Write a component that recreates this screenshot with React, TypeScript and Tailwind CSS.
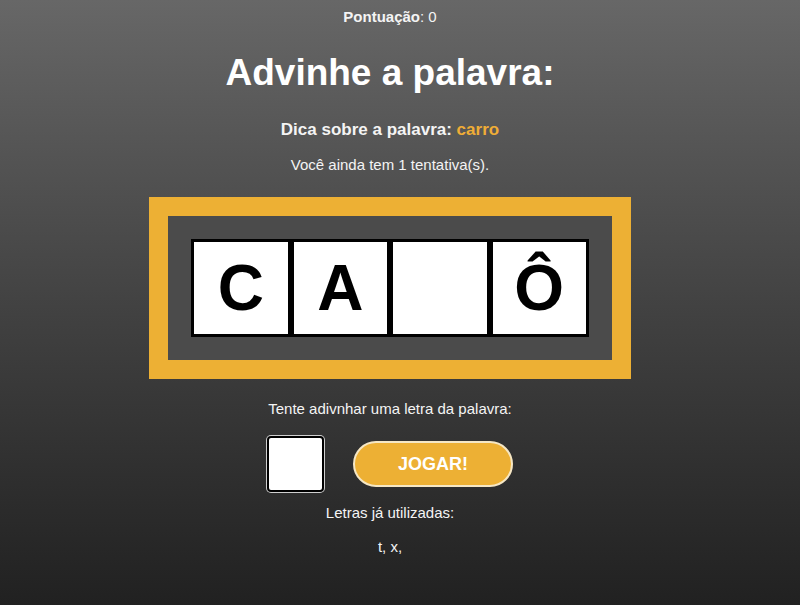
import { useState } from 'react';

const letters = ['C', 'A', '', 'Ô'];

export default function App() {
  const [guess, setGuess] = useState('');

  return (
    <div className="min-h-[605px] w-full bg-linear-to-b from-[#676767] to-[#212121] font-['Liberation_Sans',Arial,sans-serif] text-[#f4f4f4]">
      <div className="w-[780px] flex flex-col items-center text-center">
        <p className="mt-[9px] text-[15px] leading-[16px]">
          <b>Pontuação</b>: 0
        </p>

        <h1 className="mt-[28px] text-[37px] leading-[40px] font-bold text-white">Advinhe a palavra:</h1>

        <p className="mt-[27px] text-[17px] leading-[20px] font-bold">
          Dica sobre a palavra: <span className="text-[#efad36]">carro</span>
        </p>

        <p className="mt-[17px] text-[15px] leading-[16px]">Você ainda tem 1 tentativa(s).</p>

        {/* word board */}
        <div className="mt-[24px] w-[482px] border-[19px] border-[#edb034] bg-[#4b4b4b] p-[23px]">
          <div className="flex h-[98px]">
            {letters.map((l, i) => (
              <div
                key={i}
                className="flex-1 flex items-center justify-center bg-white border-[3px] border-black text-[64px] font-bold text-black leading-none"
              >
                {l}
              </div>
            ))}
          </div>
        </div>

        <p className="mt-[22px] text-[15px] leading-[16px]">Tente adivnhar uma letra da palavra:</p>

        <div className="mt-[19px] flex items-center gap-[29px] h-[56px]">
          <input
            value={guess}
            onChange={(e) => setGuess(e.target.value.slice(0, 1))}
            className="w-[57px] h-[56px] bg-white border-2 border-black rounded-[4px] ring-1 ring-[#cfcfcf] text-center text-black text-[28px] outline-none"
          />
          <button className="w-[160px] h-[46px] rounded-full bg-[#edb034] border-2 border-[#f6e7c4] text-white font-bold text-[18px]">
            JOGAR!
          </button>
        </div>

        <p className="mt-[13px] text-[15px] leading-[16px]">Letras já utilizadas:</p>

        <p className="mt-[18px] text-[15px] leading-[16px]">t, x,</p>
      </div>
    </div>
  );
}
